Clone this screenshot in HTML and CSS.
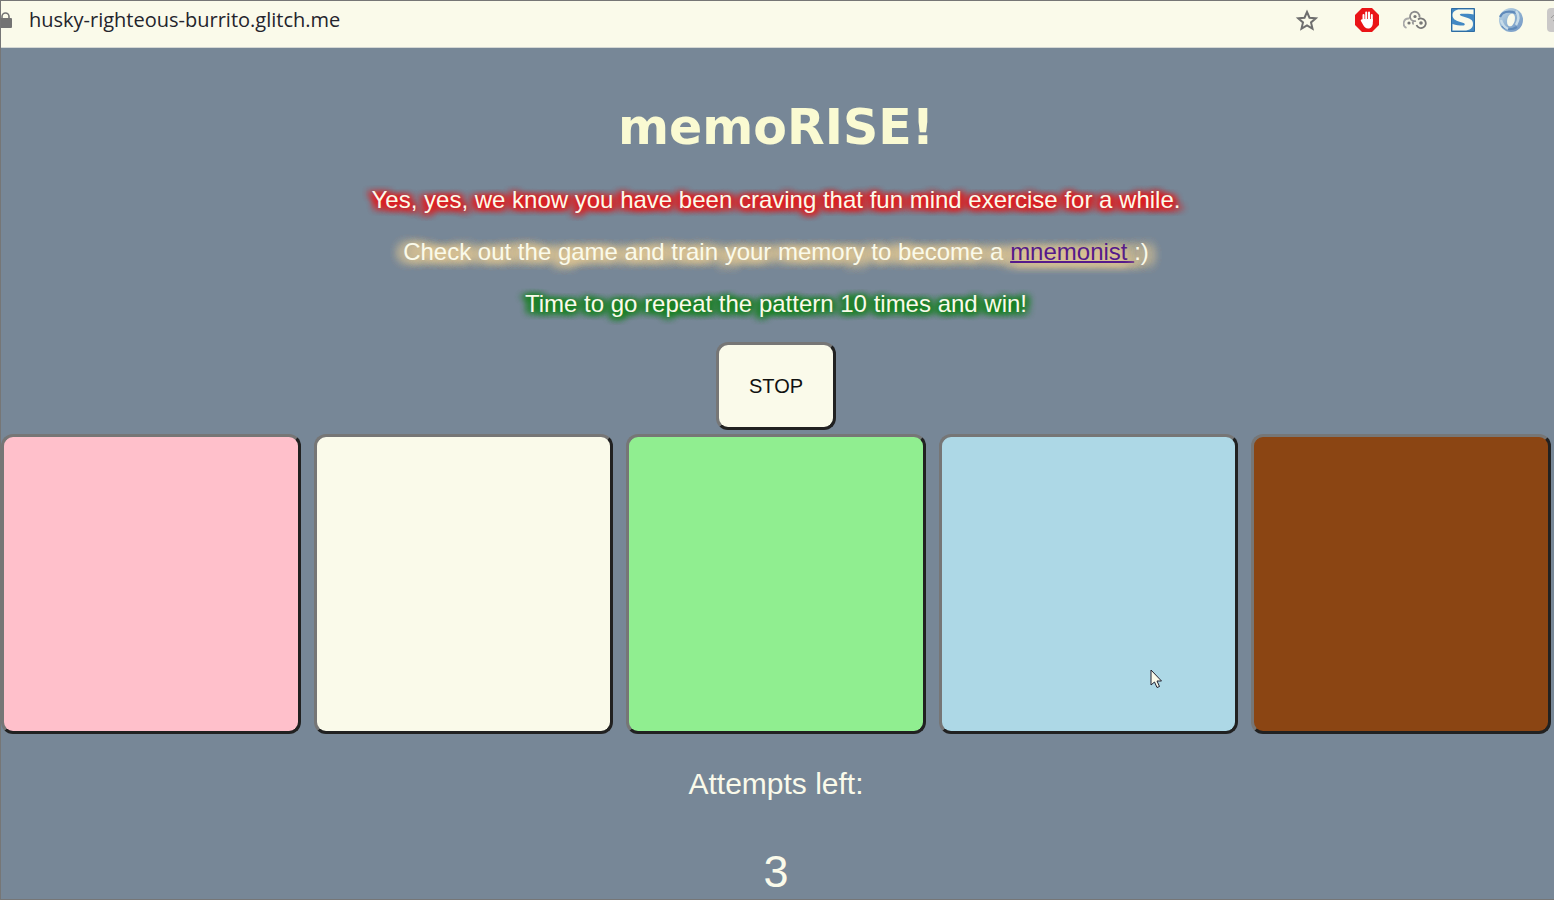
FILE: index.html
```html
<!DOCTYPE html>
<html lang="en">
<head>
<meta charset="utf-8">
<title>memoRISE!</title>
<link rel="stylesheet" href="styles.css">
</head>
<body>
<header class="toolbar">
  <svg class="lock" width="13" height="20" viewBox="0 0 13 20" aria-hidden="true">
    <path d="M1 9V6.500a3.500 3.500 0 0 1 7 0V9" fill="none" stroke="#737373" stroke-width="1.600"/>
    <rect x="-3" y="8" width="14" height="10" rx="1" fill="#737373"/>
  </svg>
  <span class="address">husky-righteous-burrito.glitch.me</span>
  <div class="extensions">
    <button class="tool star" aria-label="Bookmark this page">
      <svg width="24" height="24" viewBox="0 0 24 24"><path d="M12 4l2.500 5.700 6.300.6-4.800 4.100 1.500 6.200-5.500-3.300-5.500 3.300L8 14.400l-4.800-4.100 6.300-.6z" fill="none" stroke="#6e6e6e" stroke-width="2"/></svg>
    </button>
    <button class="tool" aria-label="Ad blocker">
      <svg width="24" height="24" viewBox="0 0 24 24"><path d="M7 0h10l7 7v10l-7 7H7l-7-7V7z" fill="#ea1417"/><g stroke="#fff" stroke-width="2" stroke-linecap="round"><path d="M8.500 14V7M11.200 13V4.500M14 13V4.500M16.800 13V7"/></g><path d="M7.500 11h10.300v4c0 3.500-2 5.500-4.800 5.500-2.300 0-3.700-1.500-4.500-3z" fill="#fff"/><path d="M7 12.500l2 3.500" stroke="#fff" stroke-width="2.500" stroke-linecap="round"/></svg>
    </button>
    <button class="tool" aria-label="Linked circles">
      <svg width="24" height="24" viewBox="0 0 24 24"><g fill="none" stroke-width="1.800"><path d="M3.500 20A5 5 0 0 1 6 10.500" stroke="#aaa"/><path d="M8 11.500A4.800 4.800 0 1 1 16.500 9.500" stroke="#8c8c8c"/><path d="M8 11.500a5 5 0 0 0 5 1.500M9.500 13.500a4.500 4.500 0 0 1 .5 3" stroke="#999"/><path d="M15 11.500A4.800 4.800 0 1 1 13.500 17" stroke="#777"/></g><g fill="#777"><circle cx="6" cy="15" r="1.600"/><circle cx="12" cy="8.500" r="1.600"/><circle cx="18" cy="15" r="1.800"/></g></svg>
    </button>
    <button class="tool" aria-label="Search helper">
      <svg width="24" height="24" viewBox="0 0 24 24"><path d="M.5.500h23v23H.5z" fill="#4288c3" stroke="#2e6da4"/><path d="M22.500 6.500V1.500H9C4 1.500 1.500 4 1.500 7c0 4 3 5.500 7 6.700l4 1.300c2 .8 1.500 2.500-.5 2.500-4 0-7-.5-10.500-1.500v6.500H13c6 0 9-2.500 9-6.500 0-3.500-2-5-6-6.300l-5.500-1.800C8 7 8.500 5.700 11 5.700c4 0 8 0 11.500.8z" fill="#fafaea"/></svg>
    </button>
    <button class="tool" aria-label="Ring">
      <svg width="24" height="24" viewBox="0 0 24 24"><defs><linearGradient id="ring" x1="0" y1="0" x2="1" y2="1"><stop offset="0" stop-color="#c9deea"/><stop offset=".5" stop-color="#8fb2d2"/><stop offset="1" stop-color="#7396c4"/></linearGradient></defs><circle cx="12" cy="12" r="12" fill="url(#ring)"/><path d="M1 9C3 4 9 2 17 5M3 18c4 4 10 4 15 1" fill="none" stroke="#5f8aba" stroke-width="2.200"/><path d="M17 3c3 4 3 9 0 14M2 12c1 4 3 7 7 9" fill="none" stroke="#c8dce8" stroke-width="2.500"/><ellipse cx="12" cy="12" rx="3.800" ry="6.500" transform="rotate(15 12 12)" fill="#fafaea"/></svg>
    </button>
    <button class="tool cut" aria-label="More extensions">
      <svg width="24" height="24" viewBox="0 0 24 24"><rect width="24" height="24" rx="4" fill="#cac8c8"/><path d="M4 10q2-4 5-2M6 13l3-2" fill="none" stroke="#999"/></svg>
    </button>
  </div>
</header>
<main class="game">
  <h1 class="title">memoRISE!</h1>
  <p class="line red">Yes, yes, we know you have been craving that fun mind exercise for a while.</p>
  <p class="line wheat">Check out the game and train your memory to become a <a class="link" href="#">mnemonist </a>:)</p>
  <p class="line green">Time to go repeat the pattern 10 times and win!</p>
  <button class="stop">STOP</button>
  <div class="board">
    <button class="pad pink" aria-label="Pink"></button>
    <button class="pad ivory" aria-label="Ivory"></button>
    <button class="pad lime" aria-label="Green"></button>
    <button class="pad blue" aria-label="Blue">
      <svg class="pointer" width="14" height="20" viewBox="0 0 14 20" aria-hidden="true"><path d="M1 1v15l3.500-3 2.500 5.500 2.500-1-2.500-5.500h4.500z" fill="#fafaea" stroke="#202030"/></svg>
    </button>
    <button class="pad brown" aria-label="Brown"></button>
  </div>
  <p class="attempts">Attempts left:</p>
  <p class="count">3</p>
</main>
</body>
</html>
```
FILE: styles.css
```css
* { box-sizing: border-box; }
body {
  margin: 0;
  min-height: 100vh;
  display: flex;
  flex-direction: column;
  overflow: hidden;
  border: 1px solid #767676;
  border-right: 0;
  background: #778797;
  color: #fafaea;
  font-family: "Liberation Sans", Arial, sans-serif;
}
.toolbar {
  display: flex;
  align-items: center;
  height: 47px;
  padding-bottom: 8px;
  border-bottom: 1px solid #d4d8d4;
  background: #fafaea;
  color: #24242c;
}
.lock { flex: none; margin-right: 15px; }
.address { font: 20px/28px "Open Sans", sans-serif; }
.extensions { display: flex; gap: 24px; margin-left: auto; margin-right: -17px; }
.tool { display: flex; padding: 0; border: 0; background: none; }
.star { margin-right: 12px; }
.game {
  display: flex;
  flex: 1;
  flex-direction: column;
  align-items: center;
  padding: 51px 3px 0 0;
}
.title {
  margin: 0 0 29px;
  color: #fafad2;
  font: bold 49px/58px "DejaVu Sans", Verdana, sans-serif;
}
.line {
  margin: 0 0 24px;
  font-size: 24px;
  line-height: 28px;
  text-shadow:
    -4px 1px 6px var(--glow), 4px 1px 6px var(--glow),
    -4px 1px 6px var(--glow), 4px 1px 6px var(--glow),
    0 1px 6px var(--glow), 0 1px 6px var(--glow);
}
.red { --glow: #e21c1e; }
.wheat {
  --glow: #e2c894;
  text-shadow:
    -5px 1px 10px var(--glow), 5px 1px 10px var(--glow),
    -5px 1px 10px var(--glow), 5px 1px 10px var(--glow),
    -5px 1px 10px var(--glow), 5px 1px 10px var(--glow);
}
.green { --glow: #178020; }
.link { color: #551a8b; text-decoration-thickness: 2px; }
.stop, .pad {
  border: 3px solid;
  border-color: #767676 #212121 #212121 #767676;
  border-radius: 12px;
}
.stop {
  width: 120px;
  height: 88px;
  margin-bottom: 4px;
  background: #fafaea;
  color: #111;
  font: 20px "Liberation Sans", Arial, sans-serif;
}
.board {
  display: grid;
  grid-template-columns: repeat(5, 1fr);
  gap: 13px;
  width: 100%;
}
.pad { position: relative; height: 300px; }
.pink { background: #ffc0cb; }
.ivory { background: #fafaea; }
.lime { background: #90ee90; }
.blue { background: #add8e6; }
.brown { background: #8b4513; }
.pointer { position: absolute; left: 71%; top: 79%; }
.attempts { margin: 32px 0 0; font-size: 30px; line-height: 36px; }
.count { margin: 44px 0 0; font-size: 45px; line-height: 52px; }
```
